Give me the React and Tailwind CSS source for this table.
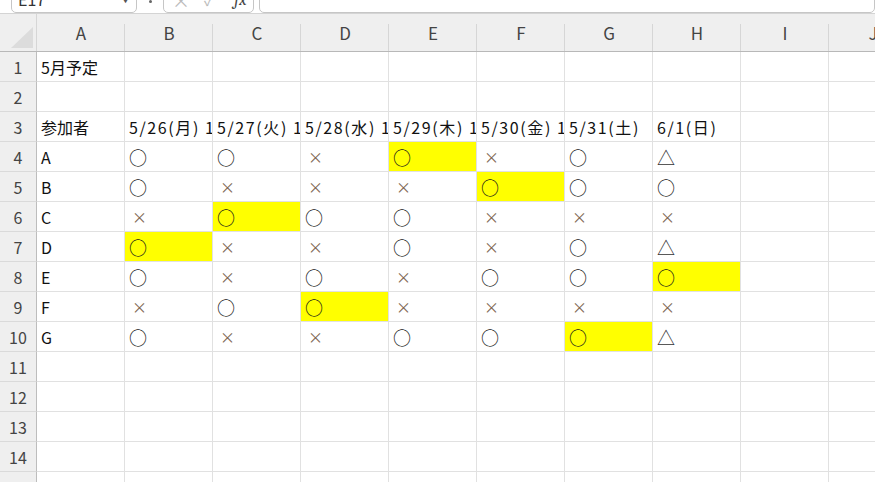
import React from "react";

const cols = ["A", "B", "C", "D", "E", "F", "G", "H", "I", "J"];

// row data: [name, B..H], "y" suffix marks a yellow cell
const people = [
  ["A", "○", "○", "×", "○y", "×", "○", "△"],
  ["B", "○", "×", "×", "×", "○y", "○", "○"],
  ["C", "×", "○y", "○", "○", "×", "×", "×"],
  ["D", "○y", "×", "×", "○", "×", "○", "△"],
  ["E", "○", "×", "○", "×", "○", "○", "○y"],
  ["F", "×", "○", "○y", "×", "×", "×", "×"],
  ["G", "○", "×", "×", "○", "○", "○y", "△"],
];

const dates = [
  "5/26(月) 1",
  "5/27(火) 1",
  "5/28(水) 1",
  "5/29(木) 1",
  "5/30(金) 1",
  "5/31(土)",
  "6/1(日)",
];

const font = { fontFamily: '"Noto Sans CJK JP", "Noto Sans", sans-serif' };

const Cell = ({ value = "", date }) => {
  const yellow = value.endsWith("y");
  const text = yellow ? value.slice(0, -1) : value;
  const isX = text === "×";
  return (
    <div
      className={`w-[88px] h-[30px] shrink-0 border-r border-b border-[#e1e1e1] flex items-center pl-[4px] overflow-hidden whitespace-nowrap ${
        yellow ? "bg-[#ffff00]" : "bg-white"
      }`}
    >
      {text === "○" && (
        <span className="text-[18px] leading-none text-[#1a1a1a]">○</span>
      )}
      {isX && (
        <span className="text-[15px] leading-none text-[#7d6650] pl-[3px]">×</span>
      )}
      {text === "△" && (
        <span className="text-[18px] leading-none text-[#333]">△</span>
      )}
      {text !== "○" && !isX && text !== "△" && (
        <span
          className={`text-[16px] leading-none text-[#111] ${
            date ? "tracking-[1.6px]" : ""
          }`}
        >
          {text}
        </span>
      )}
    </div>
  );
};

const RowHead = ({ n }) => (
  <div className="w-[37px] h-[30px] shrink-0 bg-[#efefef] border-r border-[#bdbdbd] border-b border-b-[#dadada] flex items-center justify-center text-[16px] text-[#444]">
    {n}
  </div>
);

export default function App() {
  const rows = [];
  rows.push(["5月予定"]);
  rows.push([]);
  rows.push(["参加者", ...dates]);
  people.forEach((p) => rows.push(p));
  for (let i = 0; i < 5; i++) rows.push([]);

  return (
    <div className="w-[875px] h-[482px] overflow-hidden bg-white" style={font}>
      {/* formula bar, scrolled so only its bottom shows */}
      <div className="h-[13px] overflow-hidden flex items-end bg-white">
        <div className="ml-[11px] w-[126px] h-[30px] shrink-0 border border-[#c6c6c6] rounded-[5px] flex items-center justify-between px-[6px] text-[16px] text-[#333]">
          <span className="pt-[2px]">E17</span>
          <span className="pt-[4px] text-[9px] text-[#555]">▼</span>
        </div>
        <div className="w-[26px] h-[30px] shrink-0 flex justify-center items-end pb-[10px]">
          <div className="w-[3px] h-[3px] rounded-full bg-[#666]" />
        </div>
        <div className="w-[91px] h-[30px] shrink-0 border border-[#c6c6c6] rounded-[5px] flex items-center px-[8px] gap-[14px] text-[#bbb] pt-[4px]">
          <span className="text-[18px]">×</span>
          <span className="text-[15px]">✓</span>
          <span className="text-[17px] italic text-[#444] font-serif ml-[6px]">fx</span>
        </div>
        <div className="ml-[5px] flex-1 h-[30px] border border-[#c6c6c6] rounded-[5px]" />
      </div>

      {/* column headers */}
      <div className="flex h-[39px] bg-[#efefef] border-t border-b border-t-[#d4d4d4] border-b-[#b8b8b8]">
        <div className="w-[37px] shrink-0 border-r border-[#d6d6d6] flex items-end justify-end pr-[3px] pb-[3px]">
          <svg width="22" height="21" viewBox="0 0 22 21">
            <polygon points="0,21 22,0 22,21" fill="#dcdcdc" />
          </svg>
        </div>
        {cols.map((c) => (
          <div
            key={c}
            className="w-[88px] shrink-0 flex items-center justify-center text-[17px] text-[#444] relative"
          >
            {c}
            <div className="absolute right-0 top-[10px] bottom-0 w-px bg-[#d6d6d6]" />
          </div>
        ))}
      </div>

      {/* grid body */}
      {rows.map((r, i) => (
        <div key={i} className="flex">
          <RowHead n={i + 1} />
          {Array.from({ length: 10 }).map((_, j) => (
            <Cell key={j} value={r[j] || ""} date={i === 2 && j > 0} />
          ))}
        </div>
      ))}
    </div>
  );
}
